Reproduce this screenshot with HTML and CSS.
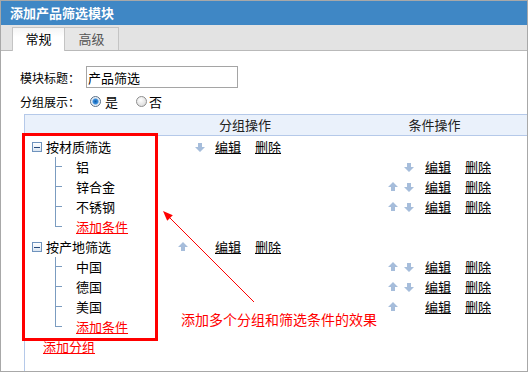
FILE: index.html
```html
<!DOCTYPE html>
<html lang="zh">
<head>
<meta charset="UTF-8">
<title>添加产品筛选模块</title>
<link rel="stylesheet" href="styles.css">
</head>
<body>

<div class="panel">
  <div class="title">添加产品筛选模块</div>
  <div class="tabs">
    <span class="tab active">常规</span>
    <span class="tab">高级</span>
  </div>

  <div class="body">
    <div class="field">
      <label>模块标题：</label>
      <input type="text" value="产品筛选">
    </div>
    <div class="field">
      <label>分组展示：</label>
      <span class="radio on"></span><span class="opt">是</span>
      <span class="radio second"></span><span class="opt">否</span>
    </div>

    <div class="grid">
      <div class="head"><span></span><span>分组操作</span><span class="cond-head">条件操作</span></div>

      <div class="rows">
        <div class="row">
          <div class="node"><span class="toggle"></span>按材质筛选</div>
          <div class="ops">
            <span class="ic blank"></span>
            <svg class="ic" viewBox="0 0 10 10"><path d="M5 10 L10 5 H7 V1 H3 V5 H0 Z"/></svg>
            <a class="edit" href="#">编辑</a><a class="del" href="#">删除</a>
          </div>
          <div></div>
        </div>
        <div class="row">
          <div class="leaf"><span class="conn"><i></i><i></i></span><span>铝</span></div>
          <div></div>
          <div class="ops cond">
            <span class="ic blank"></span>
            <svg class="ic" viewBox="0 0 10 10"><path d="M5 10 L10 5 H7 V1 H3 V5 H0 Z"/></svg>
            <a class="edit" href="#">编辑</a><a class="del" href="#">删除</a>
          </div>
        </div>
        <div class="row">
          <div class="leaf"><span class="conn"><i></i><i></i></span><span>锌合金</span></div>
          <div></div>
          <div class="ops cond">
            <svg class="ic" viewBox="0 0 10 10"><path d="M5 0 L10 5 H7 V9 H3 V5 H0 Z"/></svg>
            <svg class="ic" viewBox="0 0 10 10"><path d="M5 10 L10 5 H7 V1 H3 V5 H0 Z"/></svg>
            <a class="edit" href="#">编辑</a><a class="del" href="#">删除</a>
          </div>
        </div>
        <div class="row">
          <div class="leaf"><span class="conn"><i></i><i></i></span><span>不锈钢</span></div>
          <div></div>
          <div class="ops cond">
            <svg class="ic" viewBox="0 0 10 10"><path d="M5 0 L10 5 H7 V9 H3 V5 H0 Z"/></svg>
            <svg class="ic" viewBox="0 0 10 10"><path d="M5 10 L10 5 H7 V1 H3 V5 H0 Z"/></svg>
            <a class="edit" href="#">编辑</a><a class="del" href="#">删除</a>
          </div>
        </div>
        <div class="row">
          <div class="leaf last"><span class="conn"><i></i><i></i></span><a class="add" href="#">添加条件</a></div>
          <div></div>
          <div></div>
        </div>

        <div class="row">
          <div class="node"><span class="toggle"></span>按产地筛选</div>
          <div class="ops">
            <svg class="ic" viewBox="0 0 10 10"><path d="M5 0 L10 5 H7 V9 H3 V5 H0 Z"/></svg>
            <span class="ic blank"></span>
            <a class="edit" href="#">编辑</a><a class="del" href="#">删除</a>
          </div>
          <div></div>
        </div>
        <div class="row">
          <div class="leaf"><span class="conn"><i></i><i></i></span><span>中国</span></div>
          <div></div>
          <div class="ops cond">
            <svg class="ic" viewBox="0 0 10 10"><path d="M5 0 L10 5 H7 V9 H3 V5 H0 Z"/></svg>
            <svg class="ic" viewBox="0 0 10 10"><path d="M5 10 L10 5 H7 V1 H3 V5 H0 Z"/></svg>
            <a class="edit" href="#">编辑</a><a class="del" href="#">删除</a>
          </div>
        </div>
        <div class="row">
          <div class="leaf"><span class="conn"><i></i><i></i></span><span>德国</span></div>
          <div></div>
          <div class="ops cond">
            <svg class="ic" viewBox="0 0 10 10"><path d="M5 0 L10 5 H7 V9 H3 V5 H0 Z"/></svg>
            <svg class="ic" viewBox="0 0 10 10"><path d="M5 10 L10 5 H7 V1 H3 V5 H0 Z"/></svg>
            <a class="edit" href="#">编辑</a><a class="del" href="#">删除</a>
          </div>
        </div>
        <div class="row">
          <div class="leaf"><span class="conn"><i></i><i></i></span><span>美国</span></div>
          <div></div>
          <div class="ops cond">
            <svg class="ic" viewBox="0 0 10 10"><path d="M5 0 L10 5 H7 V9 H3 V5 H0 Z"/></svg>
            <span class="ic blank"></span>
            <a class="edit" href="#">编辑</a><a class="del" href="#">删除</a>
          </div>
        </div>
        <div class="row">
          <div class="leaf last"><span class="conn"><i></i><i></i></span><a class="add" href="#">添加条件</a></div>
          <div></div>
          <div></div>
        </div>

        <div class="row">
          <div class="addgroup"><a class="add" href="#">添加分组</a></div>
          <div></div>
          <div></div>
        </div>
      </div>
    </div>
  </div>

  <!-- annotation drawn over the screenshot -->
  <div class="mark"></div>
  <svg class="pointer" width="528" height="372" viewBox="0 0 528 372">
    <line x1="253" y1="301" x2="166" y2="214" stroke="#f00" stroke-width="1"/>
    <polygon points="162,210 171.8,214.2 166.2,219.8" fill="#f00"/>
  </svg>
  <div class="note">添加多个分组和筛选条件的效果</div>
</div>

</body>
</html>
```

FILE: styles.css
```css
* { box-sizing: border-box; }
body {
  margin: 0;
  font-family: "Noto Sans CJK SC", "Noto Sans", sans-serif;
  font-size: 13px;
  color: #000;
  background: #fff;
}
.panel {
  position: relative;
  width: 528px;
  height: 372px;
  border: 1px solid #a8a8a8;
  display: flex;
  flex-direction: column;
  overflow: hidden;
}
.title {
  height: 24px;
  line-height: 24px;
  padding-left: 9px;
  background: #3f87c5;
  color: #fff;
  font-weight: bold;
  font-size: 13px;
}
.tabs {
  display: flex;
  align-items: flex-end;
  height: 26px;
  padding-left: 11px;
  background: #e3e3e3;
  border-bottom: 1px solid #b9b9b9;
}
.tab {
  width: 53px;
  height: 23px;
  line-height: 22px;
  text-align: center;
  border: 1px solid #c4c4c4;
  border-bottom: none;
  background: #e6e6e6;
  color: #555;
}
.tab + .tab { margin-left: -1px; width: 55px; }
.tab.active {
  height: 24px;
  margin-bottom: -1px;
  background: linear-gradient(#f4f4f4, #fff 40%);
  color: #000;
}
.body {
  flex: 1;
  display: flex;
  flex-direction: column;
  padding-top: 15px;
}
.field {
  display: flex;
  align-items: center;
  height: 22px;
  padding-left: 19px;
  font-size: 12px;
}
.field + .field { margin-top: 2px; }
.field label { width: 66px; }
.field input {
  width: 152px;
  height: 22px;
  padding: 0 1px;
  border: 1px solid #a5a5a5;
  font: 13px "Noto Sans CJK SC", sans-serif;
  color: #000;
}
.radio {
  width: 11px;
  height: 11px;
  margin: 0 4px;
  border: 1px solid #8e8e8e;
  border-radius: 50%;
  background: radial-gradient(circle at 40% 35%, #fff, #d2d2d2);
}
.radio.on {
  border-color: #5a6f86;
  background: radial-gradient(circle, #0c5bab 0, #3c90de 2.5px, #e3ebf4 3.5px, #fff 6px);
}
.radio.second { margin-left: 18px; margin-right: 2px; }
.opt { font-size: 13px; }
.grid {
  flex: 1;
  margin: 2px 0 0 23px;
  border-left: 1px solid #b5c9e9;
}
.head {
  display: grid;
  grid-template-columns: 145px 150px 1fr;
  height: 22px;
  line-height: 20px;
  background: #eaf1fb;
  border-top: 1px solid #b5c9e9;
  border-bottom: 1px solid #b5c9e9;
  text-align: center;
  color: #222;
}
.head .cond-head { padding-left: 22px; }
.rows { padding-top: 1px; }
.row {
  display: grid;
  grid-template-columns: 145px 150px 1fr;
  height: 20px;
  line-height: 20px;
  align-items: center;
}
.node {
  display: flex;
  align-items: center;
  padding-left: 7px;
}
.toggle {
  width: 10px;
  height: 10px;
  margin-right: 4px;
  border: 1px solid #6f93bd;
  background: linear-gradient(#fff, #dbe6f2);
  display: flex;
  align-items: center;
  justify-content: center;
}
.toggle::after {
  content: "";
  width: 6px;
  height: 1px;
  background: #27497a;
}
.leaf {
  display: flex;
  height: 20px;
  padding-left: 30px;
}
.conn {
  width: 7px;
  margin-right: 14px;
  display: flex;
  flex-direction: column;
}
.conn i { height: 10px; border-left: 1px solid #7b9cc0; }
.conn i:first-child { border-bottom: 1px solid #7b9cc0; }
.leaf.last .conn i:last-child { border-left: none; }
.addgroup { padding-left: 18px; }
.ops {
  display: flex;
  align-items: center;
  padding-left: 8px;
}
.ops .ic { width: 10px; height: 10px; fill: #a6bddb; flex: none; }
.ops .ic + .ic { margin-left: 7px; }
.ops .edit { margin-left: 10px; }
.ops .del { margin-left: 14px; }
.ops.cond { padding-left: 68px; }
.ops.cond .ic + .ic { margin-left: 6px; }
.ops.cond .edit { margin-left: 11px; }
.ic.blank { display: inline-block; }
a { color: #000; text-decoration: underline; }
a.add { color: #f00; }
.mark {
  position: absolute;
  left: 21px;
  top: 132px;
  width: 136px;
  height: 208px;
  border: 3px solid #f00;
}
.pointer {
  position: absolute;
  left: 0;
  top: 0;
}
.note {
  position: absolute;
  left: 180px;
  top: 309px;
  font-size: 14px;
  line-height: 18px;
  color: #f00;
}
```
